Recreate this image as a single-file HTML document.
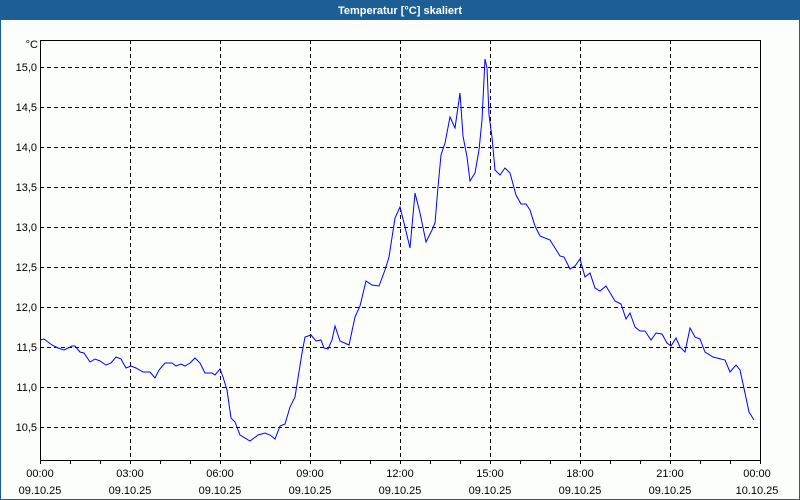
<!DOCTYPE html>
<html><head><meta charset="utf-8"><style>
html,body{margin:0;padding:0;width:800px;height:500px;overflow:hidden;background:#fcfefc;}
svg{display:block;font-family:"Liberation Sans","DejaVu Sans",sans-serif;}
</style></head><body>
<svg width="800" height="500" viewBox="0 0 800 500" xmlns="http://www.w3.org/2000/svg">
<rect x="0" y="0" width="800" height="500" fill="#fcfefc"/>
<rect x="0" y="0" width="800" height="20" fill="#1d5f95"/>
<rect x="0" y="0" width="1" height="500" fill="#1d5f95"/>
<rect x="799" y="0" width="1" height="500" fill="#1d5f95"/>
<rect x="0" y="499" width="800" height="1" fill="#1d5f95"/>
<text x="400" y="14" fill="#fff" font-size="11" font-weight="bold" text-anchor="middle">Temperatur [°C] skaliert</text>
<g stroke="#000" stroke-width="1" stroke-dasharray="4,3" fill="none" shape-rendering="crispEdges">
<path d="M40 67.5H760M40 107.5H760M40 147.5H760M40 187.5H760M40 227.5H760M40 267.5H760M40 307.5H760M40 347.5H760M40 387.5H760M40 427.5H760"/>
<path d="M130.5 40V460M220.5 40V460M310.5 40V460M400.5 40V460M490.5 40V460M580.5 40V460M670.5 40V460"/>
</g>
<g stroke="#000" stroke-width="1" fill="none" shape-rendering="crispEdges">
<rect x="40.5" y="40.5" width="720" height="420"/>
<path d="M40.5 460V464M70.5 460V464M100.5 460V464M130.5 460V464M160.5 460V464M190.5 460V464M220.5 460V464M250.5 460V464M280.5 460V464M310.5 460V464M340.5 460V464M370.5 460V464M400.5 460V464M430.5 460V464M460.5 460V464M490.5 460V464M520.5 460V464M550.5 460V464M580.5 460V464M610.5 460V464M640.5 460V464M670.5 460V464M700.5 460V464M730.5 460V464M760.5 460V464"/>
</g>
<g font-size="11" fill="#000" text-anchor="end">
<text x="38" y="48">°C</text>
<text x="37" y="71">15,0</text><text x="37" y="111">14,5</text><text x="37" y="151">14,0</text><text x="37" y="191">13,5</text><text x="37" y="231">13,0</text><text x="37" y="271">12,5</text><text x="37" y="311">12,0</text><text x="37" y="351">11,5</text><text x="37" y="391">11,0</text><text x="37" y="431">10,5</text>
</g>
<g font-size="11" fill="#000" text-anchor="middle">
<text x="40" y="477">00:00</text><text x="40" y="494">09.10.25</text>
<text x="130" y="477">03:00</text><text x="130" y="494">09.10.25</text>
<text x="220" y="477">06:00</text><text x="220" y="494">09.10.25</text>
<text x="310" y="477">09:00</text><text x="310" y="494">09.10.25</text>
<text x="400" y="477">12:00</text><text x="400" y="494">09.10.25</text>
<text x="490" y="477">15:00</text><text x="490" y="494">09.10.25</text>
<text x="580" y="477">18:00</text><text x="580" y="494">09.10.25</text>
<text x="670" y="477">21:00</text><text x="670" y="494">09.10.25</text>
<text x="757" y="477">00:00</text><text x="757" y="494">10.10.25</text>
</g>
<polyline fill="none" stroke="#0000ff" stroke-width="1" points="40,340 44,339 52,345 58,348 64,350 72,346 75,346 80,352 84,353 90,362 95,359 100,361 106,365 111,363 116,357 121,359 126,368 131,366 136,368 143,372 150,372 155,378 159,370 165,363 172,363 176,366 181,364 185,366 190,363 195,358 200,363 205,373 212,373 215,375 220,369 223,377 227,390 231,418 235,422 240,435 250,441 258,435 265,433 270,435 275,439 280,426 285,424 290,407 295,397 298,378 302,353 305,337 311,335 316,341 321,340 324,348 328,349 332,340 335,326 340,341 349,345 355,317 360,306 366,281 372,285 379,286 385,270 389,257 395,218 400,207 405,227 410,248 415,193 420,213 426,242 432,230 435,223 438,187 441,155 445,143 450,117 455,128 460,93 463,136 467,157 470,181 475,173 479,150 482,120 485,59 487,68 489,115 492,137 495,170 500,175 505,168 510,173 516,195 521,204 526,204 530,210 535,226 540,236 550,240 555,248 560,256 564,257 570,269 575,266 580,259 585,277 590,273 595,288 600,291 606,286 615,301 621,304 626,319 630,313 635,327 640,331 645,331 651,340 656,333 662,334 667,343 671,346 676,338 680,347 685,352 690,328 695,337 700,339 705,352 713,357 725,360 730,372 736,365 740,370 745,393 749,412 754,420"/>
</svg>
</body></html>
